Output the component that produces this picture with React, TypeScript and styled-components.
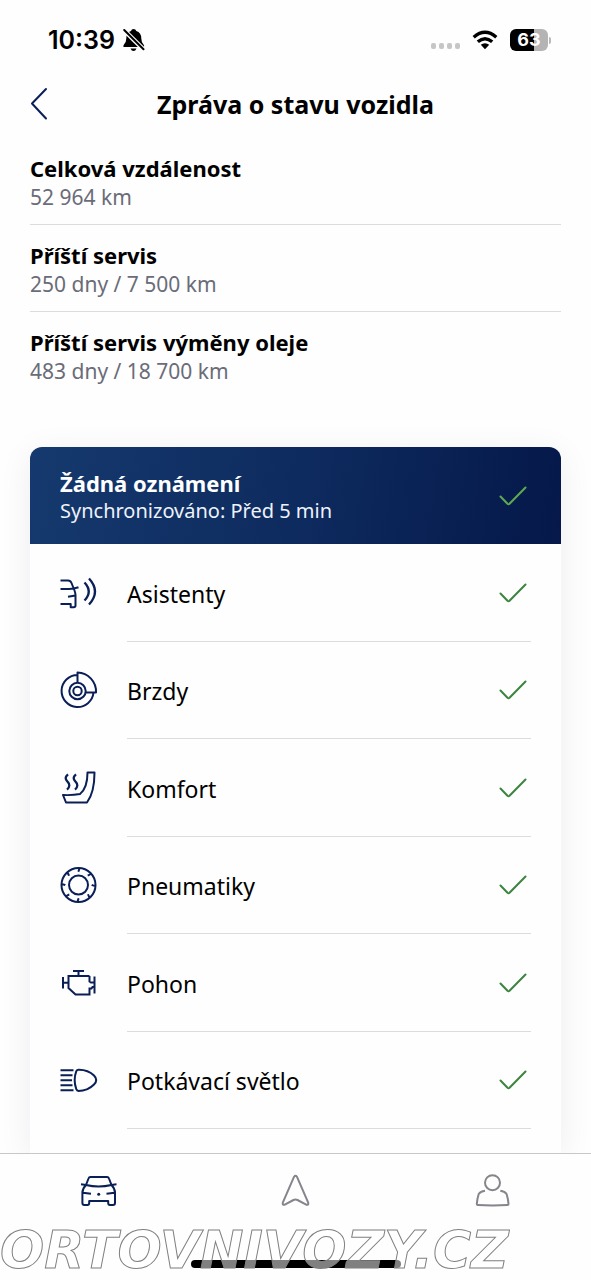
import React from "react";
import styled, { createGlobalStyle } from "styled-components";

const NAVY = "#0b1f57";

const GlobalStyle = createGlobalStyle`
  *, *::before, *::after { box-sizing: border-box; }
  body {
    margin: 0;
    background: #fefefe;
    color: #000;
    font-family: "Noto Sans", "Open Sans", sans-serif;
  }
  h1, h2, p, ul, dl, dt, dd { margin: 0; padding: 0; }
`;

const Screen = styled.div`
  position: relative;
  display: flex;
  flex-direction: column;
  min-height: 100vh;
  overflow: hidden;
`;

const StatusBar = styled.div`
  display: flex;
  align-items: center;
  justify-content: space-between;
  height: 78px;
  padding: 2px 40px 0 48px;
`;

const StatusGroup = styled.div<{ $gap: number }>`
  display: flex;
  align-items: center;
  gap: ${(p) => p.$gap}px;
`;

const Clock = styled.time`
  font-family: Inter, sans-serif;
  font-size: 25px;
  font-weight: 600;
  line-height: 32px;
`;

const TopBar = styled.header`
  display: grid;
  grid-template-columns: 40px 1fr 40px;
  align-items: center;
  height: 52px;
  padding: 0 20px;
`;

const IconButton = styled.button`
  display: flex;
  justify-content: center;
  align-items: center;
  width: 38px;
  height: 40px;
  padding: 0;
  border: 0;
  background: none;
`;

const Title = styled.h1`
  font-size: 25px;
  font-weight: 700;
  line-height: 32px;
  text-align: center;
`;

const Main = styled.main`
  display: flex;
  flex: 1;
  flex-direction: column;
  gap: 48px;
  padding: 8px 30px 0;
  overflow: hidden;
`;

const Facts = styled.dl`
  display: flex;
  flex-direction: column;
`;

const Fact = styled.div`
  height: 87px;
  padding: 15px 0;
  border-bottom: 1px solid #dcdcde;
  &:last-child { border-bottom: 0; }
`;

const FactName = styled.dt`
  font-size: 22px;
  font-weight: 700;
  line-height: 30px;
`;

const FactValue = styled.dd`
  color: #6a6c78;
  font-size: 21px;
  line-height: 28px;
`;

const Card = styled.section`
  display: flex;
  flex: 1;
  flex-direction: column;
  border-radius: 12px 12px 0 0;
  background: #fefefe;
  box-shadow: 0 6px 34px rgba(10, 20, 70, 0.07);
`;

const CardHeader = styled.div`
  display: flex;
  align-items: center;
  justify-content: space-between;
  height: 97px;
  padding: 2px 30px 0;
  border-radius: 12px 12px 0 0;
  background: linear-gradient(100deg, #15396e 0%, #0e2b5f 50%, #051849 100%);
  color: #fff;
`;

const CardTitle = styled.h2`
  font-size: 22px;
  font-weight: 700;
  line-height: 28px;
`;

const CardSubtitle = styled.p`
  color: #eef2fa;
  font-size: 20px;
  line-height: 28px;
`;

const SystemList = styled.ul`
  display: grid;
  grid-auto-rows: 1fr;
  min-height: 585px;
  padding: 0 30px;
  list-style: none;
`;

const System = styled.li`
  display: grid;
  grid-template-columns: 67px 1fr;
`;

const SystemIcon = styled.span`
  display: flex;
  align-items: center;
  margin-left: -2px;
  color: ${NAVY};
`;

const SystemBody = styled.div`
  display: flex;
  align-items: center;
  justify-content: space-between;
  padding-top: 3px;
  border-bottom: 1px solid #dcdcde;
  font-size: 23px;
  line-height: 32px;
`;

const TabBar = styled.nav`
  display: grid;
  grid-template-columns: repeat(3, 1fr);
  align-items: start;
  justify-items: center;
  height: 127px;
  padding-top: 17px;
  border-top: 1px solid #c8c8ca;
  background: #fefefe;
`;

const Tab = styled.a<{ $active?: boolean }>`
  display: flex;
  color: ${(p) => (p.$active ? NAVY : "#85858c")};
`;

const HomeIndicator = styled.div`
  position: absolute;
  bottom: 12px;
  left: 50%;
  width: 210px;
  height: 8px;
  border-radius: 4px;
  background: #000;
  transform: translateX(-50%);
`;

const Watermark = styled.div`
  position: absolute;
  bottom: 0;
  left: 0;
  color: rgba(255, 255, 255, 0.5);
  font-family: "DejaVu Sans", sans-serif;
  font-size: 52px;
  font-style: italic;
  font-weight: 700;
  line-height: 60px;
  white-space: nowrap;
  -webkit-text-stroke: 1px #808080;
  pointer-events: none;
`;

const Icon = ({ children }: { children: React.ReactNode }) => (
  <svg
    width="40"
    height="40"
    viewBox="0 0 40 40"
    fill="none"
    stroke="currentColor"
    strokeWidth="2"
    strokeLinejoin="round"
    aria-hidden="true"
  >
    {children}
  </svg>
);

const Check = ({ color }: { color: string }) => (
  <svg width="36" height="28" viewBox="0 0 36 28" fill="none" stroke={color} strokeWidth="2" strokeLinecap="round" strokeLinejoin="round" aria-hidden="true">
    <path d="M5.500 13.500l7 7.300q1 .9 2 0L30.500 4.500" />
  </svg>
);

const tyreTicks = [0, 45, 90, 135, 180, 225, 270, 315];

const systems = [
  {
    name: "Asistenty",
    icon: (
      <>
        <path d="M2.500 7.500H10q2.500 0 3.500 2.500l3 7.500q1 2.500 1 5V32.500q0 1.800-1.800 1.800H12.700V31H2.500M2.500 16H11q5 0 9.500-1.700M10 23.700l7.500-1.300" />
        <path d="M26.500 9.500q8.500 9 0 18M31 5.500q12 13 0 26" strokeWidth="2.300" />
      </>
    ),
  },
  {
    name: "Brzdy",
    icon: (
      <>
        <path d="M19.500 5A16 16 0 1 0 35.500 22.500M19.500 13V2.500A19 19 0 0 1 38 22.500H27" />
        <circle cx="19.500" cy="21" r="8.200" />
        <circle cx="19.500" cy="21" r="4.200" />
      </>
    ),
  },
  {
    name: "Komfort",
    icon: (
      <>
        <path d="M29.500 4.500h7q0 20-7.500 30H8L5 27q9.500.5 17-1 7.500-6 7.500-21.500z" />
        <path d="M10 6.300c-3 2.500-3 5-.5 7.300s2.500 5.500-.5 8M18 6.300c-3 2.500-3 5-.5 7.300s2.500 5.500-.5 8" strokeWidth="2.300" />
      </>
    ),
  },
  {
    name: "Pneumatiky",
    icon: (
      <>
        <circle cx="20.500" cy="20" r="17" />
        <circle cx="20.500" cy="20" r="9.500" />
        {tyreTicks.map((angle) => (
          <path key={angle} d="M21.300 2.800q0 2.200-1 4" transform={`rotate(${angle} 20.500 20)`} />
        ))}
      </>
    ),
  },
  {
    name: "Pohon",
    icon: (
      <path
        strokeLinejoin="miter"
        d="M15 8h11M20.500 8v5M31.500 13H10.500V25l7 6.500h14V25.500h2l1-1.500h1.500M31.500 13v5.500l1.500 1h3.500M36.500 13.500v17M5 14v11.500M5 19.700h5.500"
      />
    ),
  },
  {
    name: "Potkávací světlo",
    icon: (
      <>
        <path d="M2.500 10.300H15.500M2.500 15.200H14.500M2.500 20.200H14M2.500 25.200H14.500M2.500 30.200H15.500" />
        <path d="M20.500 9.700q-1.500 0-2.200 1.500-3.300 9 0 18 .7 1.600 2.200 1.800 9 0 15.500-6.500 4.500-4.500 0-9-6-6-15.500-5.800z" />
      </>
    ),
  },
];

const facts = [
  { name: "Celková vzdálenost", value: "52 964 km" },
  { name: "Příští servis", value: "250 dny / 7 500 km" },
  { name: "Příští servis výměny oleje", value: "483 dny / 18 700 km" },
];

const BellOff = () => (
  <svg width="22" height="24" viewBox="0 0 22 24" aria-hidden="true">
    <path d="M10.500 1q2.200 0 2.800 2 5 1.500 5 7.500 0 3.500 2.200 6 1 1.200.5 2.500H.5q-.5-1.500.5-2.500 2.300-2.500 2.300-6 0-6 4.700-7.500.5-2 2.500-2zM7.500 20.500h6q-1 2.500-3 2.500t-3-2.500z" />
    <path d="M1 2 20.500 21.500" stroke="#fefefe" strokeWidth="4.500" />
    <path d="M1.200 2 20.500 21.300" stroke="#000" strokeWidth="2" strokeLinecap="round" />
  </svg>
);

const Signal = () => (
  <svg width="29" height="20" viewBox="0 0 29 20" fill="#c6c6c6" aria-hidden="true">
    {[0, 8, 16, 24].map((x) => (
      <rect key={x} x={x} y="13" width="5" height="6" rx="2" />
    ))}
  </svg>
);

const Wifi = () => (
  <svg width="26" height="20" viewBox="0 0 26 20" fill="none" stroke="#000" strokeWidth="3.400" aria-hidden="true">
    <path d="M1.700 7.200q11.300-9.800 22.600 0M5.800 11.800q7.200-6.200 14.400 0" />
    <path d="M13 13.200q2.400 0 4.200 1.600L13 19.200l-4.200-4.400q1.800-1.600 4.200-1.600z" fill="#000" stroke="none" />
  </svg>
);

const BatteryShell = styled.div`
  display: flex;
  align-items: center;
  gap: 1px;
  &::after {
    content: "";
    width: 2px;
    height: 7px;
    border-radius: 0 2px 2px 0;
    background: #b8b8b8;
  }
`;

const BatteryLevel = styled.div`
  width: 38px;
  height: 22px;
  border-radius: 6px;
  background: linear-gradient(90deg, #000 63%, #b4b4b4 63%);
  color: #fff;
  font-family: Inter, sans-serif;
  font-size: 18px;
  font-weight: 700;
  line-height: 22px;
  text-align: center;
`;

export default function App() {
  return (
    <>
      <GlobalStyle />
      <Screen>
        <StatusBar>
          <StatusGroup $gap={8}>
            <Clock>10:39</Clock>
            <BellOff />
          </StatusGroup>
          <StatusGroup $gap={12}>
            <Signal />
            <Wifi />
            <BatteryShell>
              <BatteryLevel>63</BatteryLevel>
            </BatteryShell>
          </StatusGroup>
        </StatusBar>

        <TopBar>
          <IconButton type="button" aria-label="Zpět">
            <svg width="18" height="34" viewBox="0 0 18 34" fill="none" stroke={NAVY} strokeWidth="2" strokeLinecap="round" strokeLinejoin="round" aria-hidden="true">
              <path d="M16 2 2 16.500 16 31.500" />
            </svg>
          </IconButton>
          <Title>Zpráva o stavu vozidla</Title>
        </TopBar>

        <Main>
          <Facts>
            {facts.map((fact) => (
              <Fact key={fact.name}>
                <FactName>{fact.name}</FactName>
                <FactValue>{fact.value}</FactValue>
              </Fact>
            ))}
          </Facts>

          <Card>
            <CardHeader>
              <div>
                <CardTitle>Žádná oznámení</CardTitle>
                <CardSubtitle>Synchronizováno: Před 5 min</CardSubtitle>
              </div>
              <Check color="#5faa50" />
            </CardHeader>
            <SystemList>
              {systems.map((system) => (
                <System key={system.name}>
                  <SystemIcon>
                    <Icon>{system.icon}</Icon>
                  </SystemIcon>
                  <SystemBody>
                    {system.name}
                    <Check color="#3c8440" />
                  </SystemBody>
                </System>
              ))}
            </SystemList>
          </Card>
        </Main>

        <TabBar>
          <Tab href="#vozidlo" aria-label="Vozidlo" $active>
            <Icon>
              <path d="M7 14 9.500 7.500q.5-1.500 2-1.500h16.500q1.500 0 2 1.500L32.500 14q3.500 3.500 3.500 8v10q0 2-2 2h-3q-1.800 0-1.800-2v-2h-19v2q0 2-1.800 2h-3q-2 0-2-2V22q0-4.500 3.600-8zM2 13.300 7 14q12.500 3 25.500 0l5-.7M4 21.700l8 1M35.500 21.700l-8 1" />
              <circle cx="19.700" cy="23.300" r="1.500" fill="currentColor" stroke="none" />
            </Icon>
          </Tab>
          <Tab href="#navigace" aria-label="Navigace">
            <Icon>
              <path d="M18.100 5.700q1.400-2 2.800 0l11.300 26q.6 2.700-2 2L21.500 29q-2-1-4 0l-8.700 4.700q-2.600.7-2-2z" />
            </Icon>
          </Tab>
          <Tab href="#profil" aria-label="Profil">
            <Icon>
              <circle cx="19.500" cy="11.700" r="7.500" />
              <path d="M12 19.800q-4.500.8-6.300 3.200-1.700 5.500-1.900 10 0 1 1 1 14.700.9 29.700 0 1 0 1-1-.2-4.500-1.900-10-1.800-2.400-6.300-3.200" />
            </Icon>
          </Tab>
        </TabBar>

        <HomeIndicator />
        <Watermark>ORTOVNIVOZY.CZ</Watermark>
      </Screen>
    </>
  );
}
